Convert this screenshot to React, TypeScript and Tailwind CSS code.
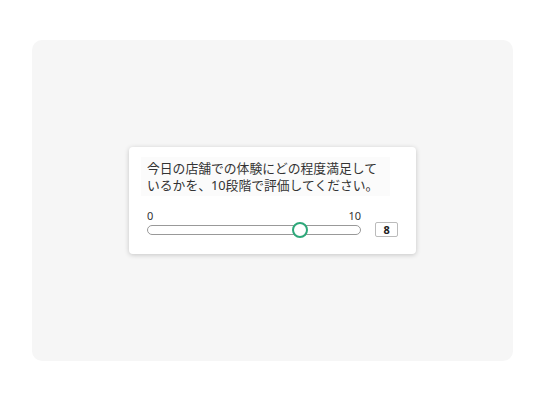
export default function App() {
  return (
    <div className="w-[546px] h-[400px] bg-white pt-10 pl-8" style={{ fontFamily: '"Noto Sans", "Noto Sans CJK JP", sans-serif' }}>
      <div className="w-[481px] h-[321px] rounded-[10px] bg-[#f6f6f6] flex items-center justify-center">
        <div className="w-[287px] h-[107px] bg-white rounded-[4px] shadow-[0_1px_5px_rgba(0,0,0,0.2)] px-3 pt-[10px]">
          <div className="w-[249px] bg-[#fbfbfb] px-1.5 pt-[3px] pb-[2px] text-[12.8px] leading-[17px] text-[#333]">
            今日の店舗での体験にどの程度満足して
            <br />
            いるかを、10段階で評価してください。
          </div>
          <div className="flex items-end gap-[14px] px-1.5 mt-[13px]">
            <div className="w-[215px]">
              <div className="flex justify-between text-[11px] leading-[14px] text-[#333]">
                <span>0</span>
                <span>10</span>
              </div>
              <div className="relative h-[10px] mt-[2px] mb-[2px] rounded-full border border-[#999] bg-white">
                <div className="absolute left-[144px] top-1/2 -translate-y-1/2 w-4 h-4 rounded-full border-2 border-[#2ea87a] bg-white" />
              </div>
            </div>
            <div className="w-[23px] h-[15px] border border-[#bbb] rounded-[2px] flex items-center justify-center text-[11px] font-bold text-[#222] leading-none">
              8
            </div>
          </div>
        </div>
      </div>
    </div>
  );
}
